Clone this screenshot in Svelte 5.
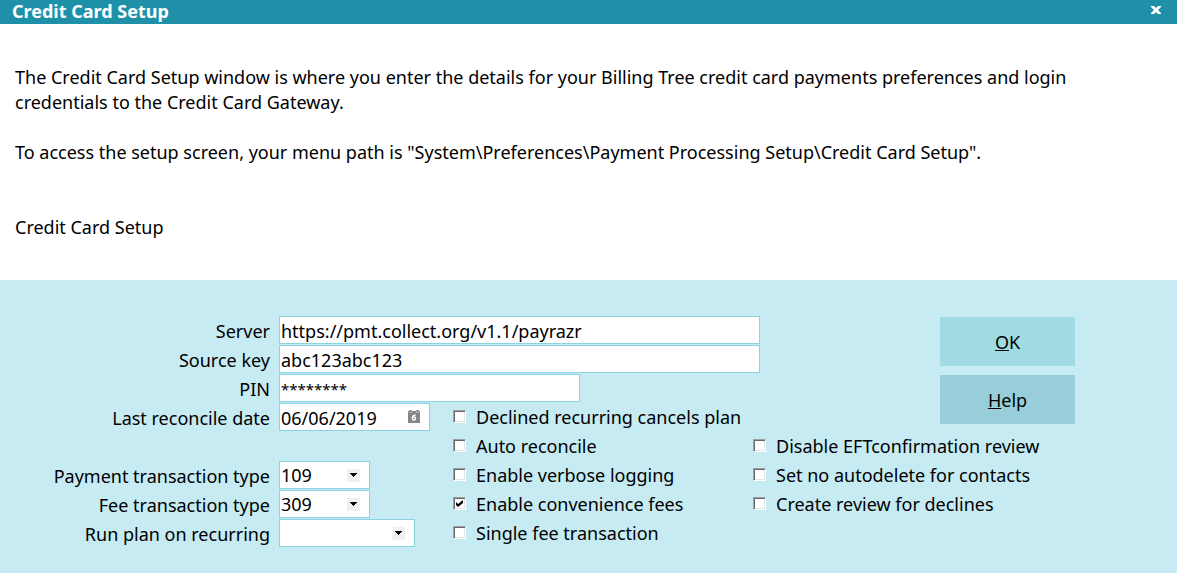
<script lang="ts">
  let server = 'https://pmt.collect.org/v1.1/payrazr';
  let sourceKey = 'abc123abc123';
  let pin = '********';
  let reconcileDate = '06/06/2019';

  let types = [
    { id: 'payment', label: 'Payment transaction type', value: '109', size: 'short' },
    { id: 'fee', label: 'Fee transaction type', value: '309', size: 'short' },
    { id: 'run', label: 'Run plan on recurring', value: '', size: 'medium' }
  ];

  let planOptions = [
    { id: 'declined', label: 'Declined recurring cancels plan', checked: false },
    { id: 'auto', label: 'Auto reconcile', checked: false },
    { id: 'verbose', label: 'Enable verbose logging', checked: false },
    { id: 'convenience', label: 'Enable convenience fees', checked: true },
    { id: 'single', label: 'Single fee transaction', checked: false }
  ];

  let reviewOptions = [
    { id: 'eft', label: 'Disable EFTconfirmation review', checked: false },
    { id: 'autodelete', label: 'Set no autodelete for contacts', checked: false },
    { id: 'declines', label: 'Create review for declines', checked: false }
  ];
</script>

<div class="window">
  <header class="titlebar">
    <h1>Credit Card Setup</h1>
    <button class="close" type="button" aria-label="Close">
      <svg width="10" height="8" viewBox="0 0 10 8">
        <path d="M0 0H3L5 2L7 0H10V1L7 4L10 7V8H7L5 6L3 8H0V7L3 4L0 1Z" fill="#fff" />
      </svg>
    </button>
  </header>

  <section class="intro">
    <p>
      The Credit Card Setup window is where you enter the details for your Billing Tree credit card payments preferences and login
      credentials to the Credit Card Gateway.
    </p>
    <p>To access the setup screen, your menu path is "System\Preferences\Payment Processing Setup\Credit Card Setup".</p>
    <h2>Credit Card Setup</h2>
  </section>

  <form class="panel">
    <label class="name" for="server">Server</label>
    <input class="box wide" id="server" type="text" bind:value={server} />

    <label class="name" for="source">Source key</label>
    <input class="box wide" id="source" type="text" bind:value={sourceKey} />

    <label class="name" for="pin">PIN</label>
    <input class="box pin" id="pin" type="text" autocomplete="off" bind:value={pin} />

    <label class="name" for="date">Last reconcile date</label>
    <div class="control date">
      <input class="box" id="date" type="text" bind:value={reconcileDate} />
      <svg class="calendar" width="12" height="13" viewBox="0 0 12 13">
        <path d="M0 1H12V13H0Z" fill="#858585" />
        <path d="M1 0H4V3H1ZM8 0H11V3H8Z" fill="#b4b4b4" />
        <path d="M2 0H3V2H2ZM9 0H10V2H9Z" fill="#6e6e6e" />
        <path d="M7.8 5.2C5.6 4.6 4.2 6 4.2 8.2" fill="none" stroke="#fff" stroke-width="1.3" />
        <circle cx="6" cy="8.6" r="1.6" fill="none" stroke="#fff" stroke-width="1.3" />
      </svg>
    </div>

    <div class="types">
      {#each types as type}
        <label class="name" for={type.id}>{type.label}</label>
        <div class="control {type.size}">
          <select class="box" id={type.id} bind:value={type.value}>
            <option value={type.value}>{type.value}</option>
          </select>
          <svg class="arrow" width="13" height="13" viewBox="0 0 13 13">
            <path d="M0 0H13V13H0Z" fill="#f0f0f0" />
            <path d="M3 4H10V5H9V6H8V7H7V8H6V7H5V6H4V5H3Z" fill="#000" />
          </svg>
        </div>
      {/each}
    </div>

    <div class="checks plan">
      {#each planOptions as option}
        <div class="check">
          <input id={option.id} type="checkbox" bind:checked={option.checked} />
          <svg class="tick" width="7" height="7" viewBox="0 0 7 7">
            <path d="M0 2L2 4L7 0V3L2 7L0 5Z" />
          </svg>
          <label for={option.id}>{option.label}</label>
        </div>
      {/each}
    </div>

    <div class="checks review">
      {#each reviewOptions as option}
        <div class="check">
          <input id={option.id} type="checkbox" bind:checked={option.checked} />
          <svg class="tick" width="7" height="7" viewBox="0 0 7 7">
            <path d="M0 2L2 4L7 0V3L2 7L0 5Z" />
          </svg>
          <label for={option.id}>{option.label}</label>
        </div>
      {/each}
    </div>

    <div class="actions">
      <button class="ok" type="button"><u>O</u>K</button>
      <button class="help" type="button"><u>H</u>elp</button>
    </div>
  </form>
</div>

<style>
  :global(body) {
    background: #c6ebf3;
  }

  .window {
    font-family: "Noto Sans", "Open Sans", sans-serif;
    font-size: 18px;
    line-height: 25px;
    color: #000;
  }

  .titlebar {
    display: flex;
    justify-content: space-between;
    height: 24px;
    padding: 0 14px 0 12px;
    background: #1e91a9;
    color: #fff;
  }

  h1 {
    margin: 0;
    font-size: 18px;
    line-height: 22px;
    font-weight: 700;
  }

  .close {
    display: flex;
    align-items: center;
    height: 20px;
    padding: 0 2px;
    border: 0;
    background: none;
  }

  .intro {
    padding: 41px 100px 40px 15px;
    background: #fff;
  }

  .intro p {
    margin: 0 0 25px;
  }

  h2 {
    margin: 50px 0 0;
    font-size: 18px;
    font-weight: 400;
  }

  .panel {
    display: grid;
    grid-template-columns: 1fr 165px 291px 178px 135px;
    grid-template-rows: repeat(8, 29px);
    column-gap: 9px;
    padding: 36px 102px 25px 0;
    background: #c6ebf3;
  }

  .box {
    box-sizing: border-box;
    width: 100%;
    height: 28px;
    margin: 0;
    padding: 1px 1px 0;
    border: 1px solid #8ad3df;
    border-radius: 0;
    background: #fff;
    color: #000;
    font: inherit;
    outline: 0;
  }

  .name {
    grid-column: 1;
    line-height: 30px;
    text-align: right;
  }

  .wide {
    grid-column: 2 / 5;
    width: 481px;
  }

  .pin {
    grid-column: 2 / 4;
    width: 301px;
    font-size: 15px;
  }

  .control {
    position: relative;
    grid-column: 2;
  }

  .date {
    width: 151px;
  }

  .short {
    width: 91px;
  }

  .medium {
    width: 136px;
  }

  .calendar {
    position: absolute;
    top: 7px;
    right: 10px;
  }

  .types {
    display: grid;
    grid-column: 1 / 3;
    grid-row: 6 / 9;
    grid-template-columns: subgrid;
    grid-template-rows: subgrid;
  }

  select {
    appearance: none;
    padding-top: 2px;
  }

  .arrow {
    position: absolute;
    top: 8px;
    right: 10px;
    pointer-events: none;
  }

  .checks {
    white-space: nowrap;
  }

  .plan {
    grid-column: 3;
    grid-row: 4 / 9;
  }

  .review {
    grid-column: 4 / 6;
    grid-row: 5 / 8;
  }

  .check {
    position: relative;
    display: flex;
    align-items: center;
    gap: 10px;
    height: 29px;
  }

  .check label {
    line-height: 29px;
  }

  .check input {
    appearance: none;
    box-sizing: border-box;
    width: 13px;
    height: 13px;
    margin: 0 0 2px;
    border: 1px solid;
    border-color: #a0a0a0 #fff #fff #a0a0a0;
    background: #fff;
    box-shadow: inset 1px 1px #696969, inset -1px -1px #e3e3e3;
  }

  .tick {
    display: none;
    position: absolute;
    top: 10px;
    left: 3px;
    pointer-events: none;
  }

  input:checked + .tick {
    display: block;
  }

  .actions {
    display: flex;
    flex-direction: column;
    gap: 9px;
    grid-column: 5;
    grid-row: 1 / 5;
    padding-top: 1px;
  }

  .actions button {
    height: 49px;
    padding: 2px 0 0;
    border: 0;
    color: #000;
    font: inherit;
  }

  .ok {
    background: #a0dbe3;
  }

  .help {
    background: #97ceda;
  }
</style>
